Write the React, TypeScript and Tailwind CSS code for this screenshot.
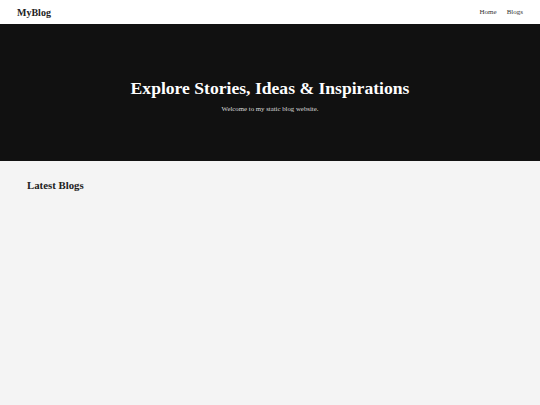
import React from "react";

const serif = { fontFamily: '"Liberation Serif", "Times New Roman", serif' };

export default function App() {
  return (
    <div className="min-h-[405px] bg-[#f4f4f4]" style={serif}>
      {/* Navbar */}
      <header className="h-6 bg-white flex items-center justify-between pl-[17px] pr-[17px]">
        <h1 className="text-[10px] font-bold text-[#222]">MyBlog</h1>
        <nav className="flex gap-[10px] text-[7px]">
          <a href="#" className="text-[#333] no-underline">Home</a>
          <a href="#" className="text-[#333] no-underline">Blogs</a>
        </nav>
      </header>

      {/* Hero */}
      <section className="h-[137px] bg-[#111] flex flex-col items-center pt-[54px]">
        <h2 className="text-[17.6px] leading-[20px] font-bold text-white">
          Explore Stories, Ideas &amp; Inspirations
        </h2>
        <p className="mt-[7px] text-[6.8px] leading-[8px] text-[#ddd]">
          Welcome to my static blog website.
        </p>
      </section>

      {/* Blogs */}
      <section className="px-[27px] pt-[18px]">
        <h3 className="text-[10.8px] leading-[13px] font-bold text-[#222]">Latest Blogs</h3>
      </section>
    </div>
  );
}
